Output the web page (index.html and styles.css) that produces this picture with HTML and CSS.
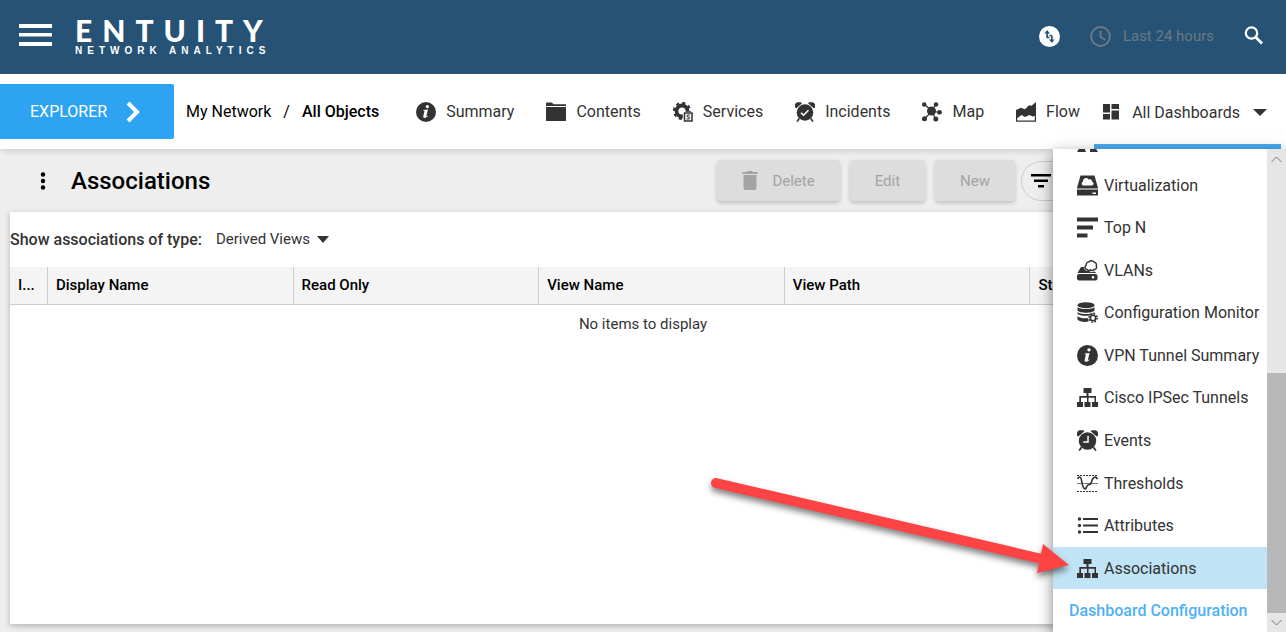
FILE: index.html
```html
<!DOCTYPE html>
<html lang="en">
<head>
    <meta charset="UTF-8">
    <title>Entuity - Associations</title>
    <link rel="stylesheet" href="styles.css">
</head>
<body>

    <svg class="sprite" aria-hidden="true">
        <symbol id="i-info" viewBox="0 0 20 20">
            <circle cx="10" cy="10" r="10"/>
            <circle cx="11.4" cy="4.6" r="1.6" fill="#fff"/>
            <path fill="#fff" d="M7.4 8.1l4.6-.5-1.6 6.2c-.1.5.1.7.5.4l.9-.6.3.5c-1.2 1.2-2.3 1.8-3.4 1.8-1.200 0-1.700-.7-1.400-1.900l1.100-4.400c.1-.5 0-.7-.5-.8l-.7-.1z"/>
        </symbol>
        <symbol id="i-tree" viewBox="0 0 21 21">
            <path d="M6.500 1h8v5h-3v3h7.500v6h2v5h-6v-5h2.500v-4.300h-6V15h2v5h-6v-5h2.500v-4.300h-6V15H6v5H0v-5h2.300V9h7.200V6h-3z"/>
        </symbol>
        <symbol id="i-alarm" viewBox="0 0 20 20">
            <path d="M0 5.500V2.500A3 3 0 0 1 2.500.2h3.300L7 1.300 1.300 6.300zM20 5.500V2.500A3 3 0 0 0 17.500.2h-3.300L13 1.300l5.700 5z"/>
            <circle cx="10" cy="10.500" r="8.300"/>
            <path d="M3.300 16l1.500 1.200L3 19.800H1.300zM16.700 16l-1.500 1.200 1.800 2.600h1.700z"/>
        </symbol>
    </svg>

    <div class="page">

        <header class="topbar">
            <button type="button" class="icon-button" aria-label="Menu">
                <svg width="33" height="22" viewBox="0 0 33 22" fill="#fff"><path d="M0 0h33v4H0zM0 9h33v3.500H0zM0 18h33v4H0z"/></svg>
            </button>
            <div class="logo">
                <span class="logo-name">ENTUITY</span>
                <span class="logo-tag">NETWORK ANALYTICS</span>
            </div>
            <div class="topbar-tools">
                <button type="button" class="icon-button" aria-label="Status">
                    <svg width="21" height="21" viewBox="0 0 21 21"><circle cx="10.500" cy="10.500" r="10.500" fill="#fff"/><path fill="none" stroke="#265275" stroke-width="1.700" d="M10.500 11.500H8.200V6M12.800 9.500V15M10.500 9.500h2.300"/><path fill="#265275" d="M5.400 7.500l2.800-3.500L11 7.500zM10 13.500l2.800 3.500 2.800-3.500z"/></svg>
                </button>
                <button type="button" class="time-button">
                    <svg width="21" height="21" viewBox="0 0 21 21" fill="none" stroke="#6b7983" stroke-width="2"><circle cx="10.500" cy="10.500" r="9.400"/><path d="M10.500 5v6l5 3"/></svg>
                    Last 24 hours
                </button>
                <button type="button" class="icon-button search-button" aria-label="Search">
                    <svg width="20" height="20" viewBox="0 0 20 20" fill="none" stroke="#fff"><circle cx="7.500" cy="7" r="5.700" stroke-width="2.200"/><path stroke-width="2.800" d="M11.800 11.300l6.200 6.200"/></svg>
                </button>
            </div>
        </header>

        <nav class="navbar">
            <button type="button" class="explorer">
                EXPLORER
                <svg width="15" height="22" viewBox="0 0 15 22" fill="none" stroke="#fff" stroke-width="4"><path d="M2 2l9 9-9 9"/></svg>
            </button>
            <div class="breadcrumb">
                <a href="#">My Network</a>
                <span>/</span>
                <a href="#" class="current">All Objects</a>
            </div>
            <div class="tabs">
                <a href="#"><svg class="icon"><use href="#i-info"/></svg>Summary</a>
                <a href="#"><svg class="icon" viewBox="0 0 20 20"><path d="M0 1.500Q0 .5 1 .5h5l1.500 1.700H20V4H0zM0 5h20v14H0z"/></svg>Contents</a>
                <a href="#"><svg class="icon" viewBox="0 0 20 20"><circle cx="9" cy="9" r="5.500" fill="none" stroke="#333" stroke-width="3.800"/><circle cx="9" cy="9" r="8" fill="none" stroke="#333" stroke-width="2.200" stroke-dasharray="3.140 3.140"/><path fill="#fff" d="M9.800 9.800H20V20H9.800z"/><path fill="none" stroke="#333" stroke-width="1.500" d="M11.500 11h7.500v8h-7.500z"/><path fill="none" stroke="#333" d="M17 13h-2.700v2h1.900v2h-2.700"/></svg>Services</a>
                <a href="#"><svg class="icon" viewBox="0 0 20 20"><use href="#i-alarm" width="20" height="20"/><path fill="none" stroke="#fff" stroke-width="1.600" d="M6 10.700l2.500 2.500 5-5"/></svg>Incidents</a>
                <a href="#"><svg class="icon" viewBox="0 0 20 20"><path fill="none" stroke="#333" stroke-width="1.200" d="M2 2l8 7 4-7M2.500 17L10 9l3.500 8M10 9l7.500 1.500"/><circle cx="9.500" cy="9" r="4.500"/><circle cx="2.200" cy="2.500" r="2.200"/><circle cx="14" cy="2.500" r="2.300"/><circle cx="17.500" cy="10.300" r="2.400"/><circle cx="2.500" cy="16.800" r="2.500"/><circle cx="13.800" cy="17" r="2.500"/></svg>Map</a>
                <a href="#"><svg class="icon" viewBox="0 0 20 20"><path fill="none" stroke="#333" stroke-width="1.200" d="M.6 9v10.200h18.800V2"/><path d="M0 14.500V8l5-2.200 4 1.500 4-4 2.500.5L20 0v13.500l-3.500 1-3-1.500-4.500 2-3.500-2-4 3z"/></svg>Flow</a>
            </div>
            <button type="button" class="dashboards">
                <svg width="16" height="16" viewBox="0 0 16 16"><path d="M0 0h7v8.500H0zM8.500 0H16v5H8.500zM0 10h7v5.500H0zM8.500 6.500H16v9H8.500z"/></svg>
                All Dashboards
                <span class="caret"></span>
            </button>
        </nav>

        <main class="content">
            <div class="toolbar">
                <button type="button" class="icon-button" aria-label="More">
                    <svg width="6" height="18" viewBox="0 0 6 18"><circle cx="3" cy="2.500" r="2.200"/><circle cx="3" cy="9" r="2.200"/><circle cx="3" cy="15.500" r="2.200"/></svg>
                </button>
                <h1>Associations</h1>
                <div class="actions">
                    <button type="button" class="btn" disabled>
                        <svg width="16" height="20" viewBox="0 0 16 20" fill="#a3a3a3"><path d="M.5 1H5l1-1h4l1 1h4.500v2H.5zM1.500 4h13v13a2 2 0 0 1-2 2h-9a2 2 0 0 1-2-2z"/></svg>
                        Delete
                    </button>
                    <button type="button" class="btn" disabled>Edit</button>
                    <button type="button" class="btn" disabled>New</button>
                </div>
                <div class="filter">
                    <svg width="20" height="14" viewBox="0 0 20 14"><path d="M0 0h20v2.500H0zM3 5.500h14V8H3zM7 11h6v2.500H7z"/></svg>
                    <input type="text" aria-label="Filter">
                </div>
            </div>

            <section class="panel">
                <div class="type-row">
                    <label for="type">Show associations of type:</label>
                    <select id="type">
                        <option>Derived Views</option>
                    </select>
                </div>
                <table>
                    <thead>
                        <tr>
                            <th class="col-id">I...</th>
                            <th>Display Name</th>
                            <th>Read Only</th>
                            <th>View Name</th>
                            <th>View Path</th>
                            <th>Status</th>
                        </tr>
                    </thead>
                    <tbody>
                        <tr>
                            <td colspan="6">No items to display</td>
                        </tr>
                    </tbody>
                </table>
            </section>
        </main>

        <div class="menu">
            <div class="menu-body">
                <div class="menu-cut">
                    <svg width="21" height="21" viewBox="0 0 21 21"><path d="M3 2h4v14l2 5H0l3-5zM14 2h4v14l3 5h-8v-5z"/></svg>
                </div>
                <ul>
                    <li><a href="#"><svg class="icon" viewBox="0 0 21 21"><path d="M3.500.5h14L21 13H0z"/><path fill="#999" d="M0 13h21v2H0z"/><path d="M0 15h21v5.500H0z"/><path fill="#fff" d="M15.500 17.500H19V19h-3.500zM6 10.500a2.200 2.200 0 0 1 0-4 3 3 0 0 1 5.500-2 2.500 2.500 0 0 1 3.700 2.200 2 2 0 0 1 0 3.800z"/></svg>Virtualization</a></li>
                    <li><a href="#"><svg class="icon" viewBox="0 0 21 21"><path d="M0 .5h21v4H0zM0 8.500h16v4H0zM0 16.500h10.500v4H0z"/></svg>Top N</a></li>
                    <li><a href="#"><svg class="icon" viewBox="0 0 21 21"><path d="M4 7h3c0 3 2 4.500 5 4 1.500 1.500 4 1.500 5 .2L19.500 13h-19zM2 14h16.500a2 2 0 0 1 2 2v2.500a2 2 0 0 1-2 2H2a2 2 0 0 1-2-2V16a2 2 0 0 1 2-2z"/><circle cx="16" cy="17.300" r="1.200" fill="#fff"/><path fill="none" stroke="#333" stroke-width="1.400" d="M10 9.500a2.300 2.300 0 0 1-.8-4.300A3 3 0 0 1 12 1.800a3.300 3.300 0 0 1 5.200.4 2.500 2.500 0 0 1 2 3.600A2.400 2.400 0 0 1 17 9.500a2.500 2.500 0 0 1-3.500.2 2.500 2.500 0 0 1-3.500-.2z"/></svg>VLANs</a></li>
                    <li><a href="#"><svg class="icon" viewBox="0 0 21 21"><ellipse cx="9" cy="3.200" rx="8.500" ry="3"/><path d="M.5 5c2 2.800 15 2.800 17 0v3.500c-2 3-15 3-17 0zM.5 10c2 2.800 15 2.800 17 0v1.300l-5 2.200c-4 .7-10 .3-12-1.800zM.5 14c2 2.300 7 2.700 10.500 2l.5 3.600C7 20.300 2 19.700.5 17.500z"/><circle cx="16" cy="16" r="2.700" fill="none" stroke="#333" stroke-width="1.600"/><circle cx="16" cy="16" r="4.200" fill="none" stroke="#333" stroke-width="1.500" stroke-dasharray="1.650 1.650"/></svg>Configuration Monitor</a></li>
                    <li><a href="#"><svg class="icon"><use href="#i-info"/></svg>VPN Tunnel Summary</a></li>
                    <li><a href="#"><svg class="icon"><use href="#i-tree"/></svg>Cisco IPSec Tunnels</a></li>
                    <li><a href="#"><svg class="icon" viewBox="0 0 20 20"><use href="#i-alarm" width="20" height="20"/><path fill="none" stroke="#fff" stroke-width="1.400" d="M10.500 5.500v6H6"/></svg>Events</a></li>
                    <li><a href="#"><svg class="icon" viewBox="0 0 21 21"><g fill="none" stroke="#333"><path stroke-dasharray="2 1" d="M0 2.500h21M0 18.500h21"/><path stroke="#777" d="M0 10.500h21"/><path stroke-width="1.600" d="M.5 6C2 2.800 4 3.500 4.500 7s1 8 3.500 9c2-.5 1-3.500 3.500-4.200 3-.3 2.500-1.500 3.500-4.500S18.500 2.500 20.500 6"/></g></svg>Thresholds</a></li>
                    <li><a href="#"><svg class="icon" viewBox="0 0 21 21"><path d="M6 3h15v2H6zM6 9.500h15v2H6zM6 16h15v2H6z"/><circle cx="2.500" cy="4" r="1.700"/><circle cx="2.500" cy="10.500" r="1.700"/><circle cx="2.500" cy="17" r="1.700"/></svg>Attributes</a></li>
                    <li class="selected"><a href="#"><svg class="icon"><use href="#i-tree"/></svg>Associations</a></li>
                    <li class="config"><a href="#">Dashboard Configuration</a></li>
                </ul>
            </div>
            <div class="scrollbar">
                <svg width="19" height="19" viewBox="0 0 19 19"><path d="M4.500 13L9.500 8l5 5"/></svg>
                <div class="track"><div class="thumb"></div></div>
                <svg width="19" height="19" viewBox="0 0 19 19"><path d="M4.500 7l5 5 5-5"/></svg>
            </div>
        </div>

        <svg class="arrow" width="380" height="120" viewBox="0 0 380 120" fill="#fd4343">
            <path stroke="#fd4343" stroke-width="10" stroke-linecap="round" d="M16 23l326 76"/>
            <path d="M343 84l26 21-32 8z"/>
        </svg>

    </div>

</body>
</html>
```
FILE: styles.css
```css
* {
    box-sizing: border-box;
}

body {
    margin: 0;
    font-family: Roboto, "Liberation Sans", sans-serif;
    font-size: 16px;
    color: #333;
    background-color: #eee;
}

a {
    color: inherit;
    text-decoration: none;
}

button {
    font-family: inherit;
    font-size: 16px;
    color: inherit;
    border: none;
    background: none;
    padding: 0;
    cursor: pointer;
}

svg {
    display: block;
    flex-shrink: 0;
}

.sprite {
    position: absolute;
    width: 0;
    height: 0;
}

.icon {
    width: 20px;
    height: 20px;
    fill: #333;
}

.page {
    position: relative;
    display: flex;
    flex-direction: column;
    min-height: 100vh;
    overflow: hidden;
}

/* top bar */

.topbar {
    display: flex;
    align-items: center;
    height: 74px;
    padding: 0 22px 4px 19px;
    background-color: #265275;
    color: #fff;
}

.logo {
    display: flex;
    flex-direction: column;
    margin-left: 23px;
}

.logo-name {
    font-family: Lato, sans-serif;
    font-size: 30px;
    font-weight: 900;
    line-height: 32px;
    letter-spacing: 10px;
}

.logo-tag {
    font-family: "Liberation Sans", sans-serif;
    font-size: 10px;
    font-weight: 700;
    line-height: 10px;
    letter-spacing: 5px;
}

.topbar-tools {
    display: flex;
    align-items: center;
    gap: 30px;
    margin-left: auto;
    padding-top: 2px;
}

.time-button {
    display: flex;
    align-items: center;
    gap: 12px;
    font-size: 15px;
    color: #6b7983;
}

/* navigation */

.navbar {
    position: relative;
    z-index: 1;
    display: flex;
    align-items: center;
    height: 75px;
    padding-right: 5px;
    background-color: #fff;
    box-shadow: 0 4px 6px -2px rgba(0,0,0,0.15);
    white-space: nowrap;
}

.explorer {
    display: flex;
    align-items: center;
    gap: 19px;
    width: 174px;
    height: 55px;
    padding-left: 30px;
    border-radius: 0 2px 2px 0;
    background-color: #2ea3f2;
    color: #fff;
}

.breadcrumb {
    display: flex;
    gap: 12px;
    margin-left: 12px;
    color: #000;
}

.breadcrumb .current {
    font-weight: 500;
}

.tabs {
    display: flex;
    gap: 32px;
    margin-left: 37px;
}

.tabs a {
    display: flex;
    align-items: center;
    gap: 10px;
}

.dashboards {
    display: flex;
    align-items: center;
    gap: 13px;
    height: 100%;
    margin-left: auto;
    padding: 6px 14px 0 9px;
    border-bottom: 5px solid #4aaaf0;
    fill: #333;
}

.caret {
    border: 7px solid transparent;
    border-top-color: #333;
    border-bottom: none;
}

/* content */

.content {
    display: flex;
    flex-direction: column;
    flex: 1;
    padding: 0 10px 8px;
}

.toolbar {
    display: flex;
    align-items: center;
    height: 63px;
    padding-left: 30px;
}

h1 {
    margin: 0 0 0 25px;
    font-size: 24px;
    font-weight: 500;
    color: #000;
}

.actions {
    display: flex;
    gap: 10px;
    margin-left: auto;
}

.btn {
    display: flex;
    align-items: center;
    gap: 14px;
    height: 41px;
    padding: 0 25px;
    border-radius: 4px;
    background-color: #ddd;
    box-shadow: 0 2px 4px rgba(0,0,0,0.2);
    font-size: 15px;
    color: #a3a3a3;
}

.filter {
    display: flex;
    align-items: center;
    gap: 8px;
    width: 255px;
    height: 40px;
    margin-left: 6px;
    padding: 0 9px;
    border: 1px solid #ccc;
    border-radius: 20px;
}

.filter input {
    flex: 1;
    min-width: 0;
    border: none;
    background: none;
}

.panel {
    flex: 1;
    background-color: #fff;
    box-shadow: 0 2px 6px rgba(0,0,0,0.25);
}

.type-row {
    display: flex;
    align-items: center;
    gap: 14px;
    height: 55px;
}

.type-row label {
    font-weight: 500;
}

select {
    appearance: none;
    padding: 0 19px 1px 0;
    border: none;
    background: url("data:image/svg+xml;charset=US-ASCII,%3Csvg%20xmlns='http://www.w3.org/2000/svg'%20width='12'%20height='7'%20viewBox='0%200%2012%207'%3E%3Cpath%20fill='%23333'%20d='M0%200h12l-6%207z'/%3E%3C/svg%3E") no-repeat right center;
    font-family: inherit;
    font-size: 15px;
    color: #333;
}

table {
    width: 100%;
    table-layout: fixed;
    border-collapse: separate;
    border-spacing: 0;
    font-size: 15px;
}

th {
    height: 38px;
    padding: 0 8px 2px;
    overflow: hidden;
    text-overflow: ellipsis;
    white-space: nowrap;
    text-align: left;
    font-weight: 500;
    color: #000;
    background-color: #f4f4f4;
    border-right: 1px solid #ccc;
    border-bottom: 1px solid #ccc;
}

.col-id {
    width: 38px;
}

td {
    height: 38px;
    padding: 0;
    text-align: center;
}

/* dashboards menu */

.menu {
    position: absolute;
    top: 149px;
    right: 0;
    bottom: 0;
    z-index: 2;
    display: flex;
    width: 233px;
    background-color: #fff;
    box-shadow: 0 5px 14px rgba(0,0,0,0.5);
}

.menu-body {
    display: flex;
    flex-direction: column;
    flex: 1;
}

.menu-cut {
    display: flex;
    align-items: flex-start;
    flex-direction: column;
    height: 15px;
    padding-bottom: 12px;
    padding-left: 24px;
    justify-content: flex-end;
    overflow: hidden;
    fill: #333;
}

.menu ul {
    display: grid;
    grid-auto-rows: 1fr;
    flex: 1;
    margin: 0;
    padding: 0;
    list-style: none;
}

.menu li a {
    display: flex;
    align-items: center;
    gap: 6px;
    height: 100%;
    padding-left: 24px;
    white-space: nowrap;
}

.menu .icon {
    width: 21px;
    height: 21px;
}

.menu .selected {
    background-color: #c0e3f5;
}

.menu .config a {
    padding-left: 16px;
    font-weight: 500;
    color: #4db1f8;
}

.scrollbar {
    display: flex;
    flex-direction: column;
    width: 19px;
    background-color: #e6e6e6;
    fill: none;
    stroke: #777;
}

.track {
    display: flex;
    flex-direction: column;
    justify-content: flex-end;
    flex: 1;
}

.thumb {
    height: 54%;
    background-color: #b8b8b8;
}

/* pointer to the selected entry */

.arrow {
    position: absolute;
    top: 460px;
    left: 700px;
    z-index: 3;
    filter: drop-shadow(0 4px 3px rgba(0,0,0,0.5));
    pointer-events: none;
}
```
